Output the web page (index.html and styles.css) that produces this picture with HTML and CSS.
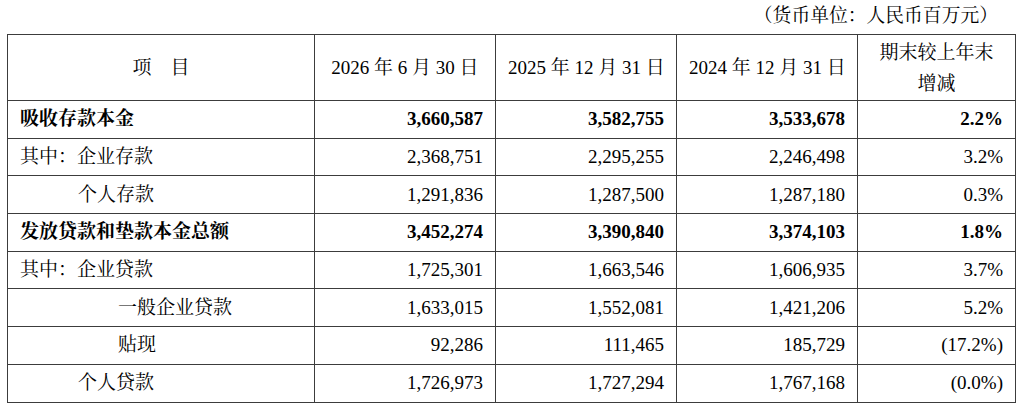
FILE: index.html
```html
<!DOCTYPE html>
<html lang="zh-CN">
<head>
<meta charset="utf-8">
<title>存贷款</title>
<link rel="stylesheet" href="styles.css">
</head>
<body>
<div class="page">
  <div class="unit">（货币单位：人民币百万元）</div>
  <table class="fin">
    <colgroup>
      <col class="c-item">
      <col class="c-num">
      <col class="c-num">
      <col class="c-num">
      <col class="c-pct">
    </colgroup>
    <thead>
      <tr class="head">
        <th>项　目</th>
        <th>2026 年 6 月 30 日</th>
        <th>2025 年 12 月 31 日</th>
        <th>2024 年 12 月 31 日</th>
        <th class="two">期末较上年末<br>增减</th>
      </tr>
    </thead>
    <tbody>
      <tr class="bold">
        <td class="label">吸收存款本金</td>
        <td>3,660,587</td><td>3,582,755</td><td>3,533,678</td><td>2.2%</td>
      </tr>
      <tr>
        <td class="label">其中：企业存款</td>
        <td>2,368,751</td><td>2,295,255</td><td>2,246,498</td><td>3.2%</td>
      </tr>
      <tr>
        <td class="label ind3">个人存款</td>
        <td>1,291,836</td><td>1,287,500</td><td>1,287,180</td><td>0.3%</td>
      </tr>
      <tr class="bold">
        <td class="label">发放贷款和垫款本金总额</td>
        <td>3,452,274</td><td>3,390,840</td><td>3,374,103</td><td>1.8%</td>
      </tr>
      <tr>
        <td class="label">其中：企业贷款</td>
        <td>1,725,301</td><td>1,663,546</td><td>1,606,935</td><td>3.7%</td>
      </tr>
      <tr>
        <td class="label ind5">一般企业贷款</td>
        <td>1,633,015</td><td>1,552,081</td><td>1,421,206</td><td>5.2%</td>
      </tr>
      <tr>
        <td class="label ind5">贴现</td>
        <td>92,286</td><td>111,465</td><td>185,729</td><td>(17.2%)</td>
      </tr>
      <tr>
        <td class="label ind3">个人贷款</td>
        <td>1,726,973</td><td>1,727,294</td><td>1,767,168</td><td>(0.0%)</td>
      </tr>
    </tbody>
  </table>
</div>
</body>
</html>
```
FILE: styles.css
```css
html, body {
  margin: 0;
  padding: 0;
  background: #ffffff;
}

body {
  font-family: "Liberation Serif", "Noto Serif CJK SC", "Noto Sans CJK SC", serif;
  font-size: 19px;
  color: #000;
}

.page {
  padding: 0 9px 0 7px;
}

.unit {
  height: 34px;
  line-height: 32px;
  text-align: right;
  padding-right: 17px;
  box-sizing: border-box;
  font-size: 18.8px;
}

.fin {
  width: 100%;
  border-collapse: collapse;
  table-layout: fixed;
}

.c-item { width: 307px; }
.c-num { width: 181px; }
.c-pct { width: 158px; }

.fin th,
.fin td {
  border: 1px solid #3c3c3c;
  padding: 0 12px;
  white-space: nowrap;
}

.fin th {
  font-weight: normal;
  text-align: center;
  line-height: 31px;
}

.head {
  height: 66px;
}

.fin tbody tr {
  height: 37.7px;
}

.fin td {
  text-align: right;
  line-height: 22px;
}

.fin td.label {
  text-align: left;
}

.ind3 { padding-left: 70px !important; }
.ind5 { padding-left: 110px !important; }

.bold td {
  font-weight: bold;
}
```
